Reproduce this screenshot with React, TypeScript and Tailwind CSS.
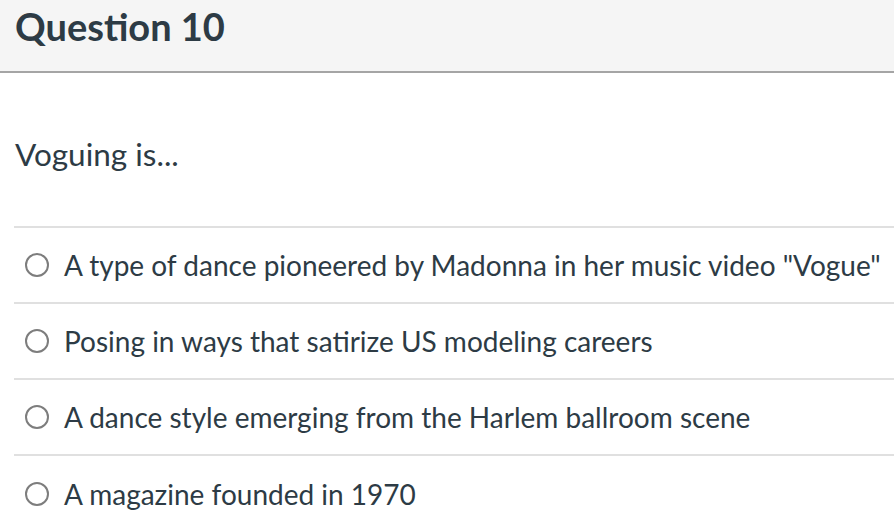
const options = [
  'A type of dance pioneered by Madonna in her music video "Vogue"',
  "Posing in ways that satirize US modeling careers",
  "A dance style emerging from the Harlem ballroom scene",
  "A magazine founded in 1970",
];

export default function App() {
  return (
    <div className="w-[894px] h-[530px] overflow-hidden bg-white text-[#2d3b45] font-['Lato','Liberation_Sans',sans-serif]">
      <div className="h-[73px] bg-[#f5f5f5] border-b-2 border-[#a5a5a5] px-[15px] flex items-start pt-[4px]">
        <h2 className="text-[38px] font-bold leading-[44px]">Question 10</h2>
      </div>
      <div className="pl-[14px]">
        <div className="h-[155px] pt-[60px] border-b-2 border-[#e0e0e0]">
          <p className="text-[31.5px] leading-[42px] pl-[1px]">Voguing is...</p>
        </div>
        {options.map((opt, i) => (
          <div
            key={i}
            className={
              "h-[76px] flex items-center gap-[15px] pl-[11px] " +
              (i < options.length - 1 ? "border-b-2 border-[#e0e0e0]" : "")
            }
          >
            <span className="w-[24px] h-[24px] rounded-full border-2 border-[#7d7d7d] bg-white shrink-0" />
            <span className="text-[28px] leading-[34px] whitespace-nowrap">{opt}</span>
          </div>
        ))}
      </div>
    </div>
  );
}
